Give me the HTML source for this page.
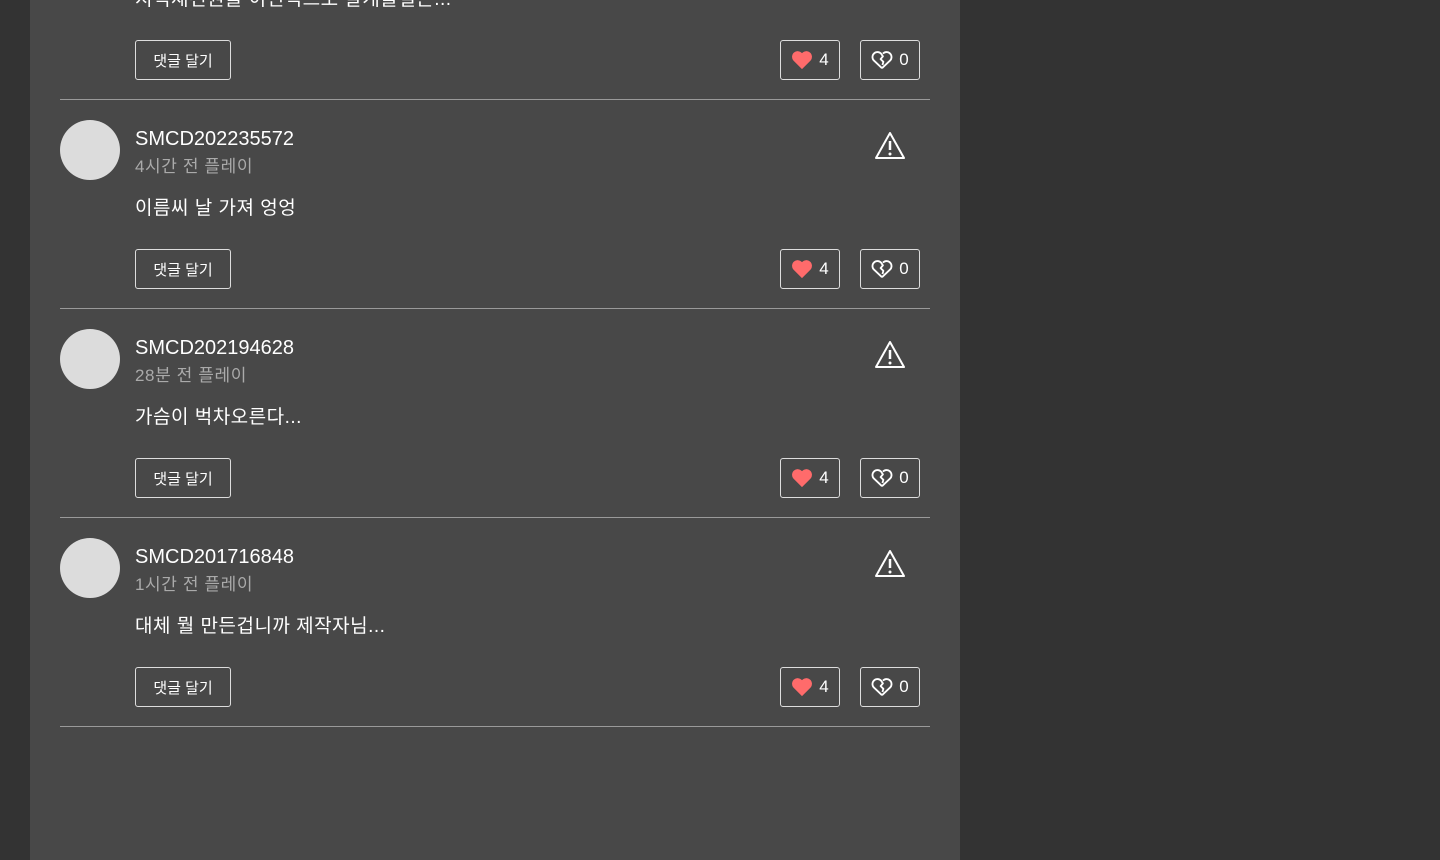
<!DOCTYPE html>
<html><head><meta charset="utf-8"><style>
*{margin:0;padding:0;box-sizing:border-box}
body{width:1440px;height:860px;background:#333;overflow:hidden;font-family:"Liberation Sans","Noto Sans CJK KR",sans-serif;position:relative}
.panel{position:absolute;left:30px;top:0;width:930px;height:860px;background:#484848}
.item{position:absolute;left:30px;width:870px;height:209px;border-bottom:1px solid #9a9a9a}
.av{position:absolute;left:0;top:20px;width:60px;height:60px;border-radius:50%;background:#dcdcdc}
.name{position:absolute;left:75px;top:28px;font-size:20px;color:#fff}
.time{position:absolute;left:75px;top:52px;font-size:17px;color:#aaa;letter-spacing:0.6px}
.txt{position:absolute;left:75px;top:93px;font-size:19px;color:#fff;letter-spacing:0.5px}
.btn{position:absolute;top:149px;height:40px;border:1px solid #ddd;border-radius:3px;color:#fff;font-size:15px;display:flex;align-items:center;justify-content:center}
.reply{left:75px;width:96px}
.like{left:720px;width:60px;gap:6px;font-size:17px}
.dis{left:800px;width:60px;gap:6px;font-size:17px}
.warn{position:absolute;left:814px;top:31px}
</style></head><body>
<div class="panel">
<div class="item" style="top:-109px">
<div class="txt">지역재건권을 이런식으로 날개줄걸는...</div>
<div class="btn reply">댓글 달기</div>
<div class="btn like"><svg width="22" height="20" viewBox="0 0 24 22"><path d="M12 21L2.5 11.5A5.5 5.5 0 0 1 12 3.5a5.5 5.5 0 0 1 9.5 8z" fill="#ff6b6b"/></svg>4</div>
<div class="btn dis"><svg width="22" height="20" viewBox="0 0 24 22"><path d="M12 20L3 11.5A5 5 0 0 1 11 4l2 3-2.5 3 3 3-1 3.5M12 20l9-8.5A5 5 0 0 0 13 4" fill="none" stroke="#fff" stroke-width="2" stroke-linejoin="round"/></svg>0</div>
</div>
<div class="item" style="top:100px">
<div class="av"></div><div class="name">SMCD202235572</div><div class="time">4시간 전 플레이</div><div class="txt">이름씨 날 가져 엉엉</div>
<svg class="warn" width="32" height="30" viewBox="0 0 32 30"><path d="M16 2L30 27H2Z" fill="none" stroke="#fff" stroke-width="2" stroke-linejoin="round"/><path d="M16 10v9" stroke="#fff" stroke-width="2.5"/><circle cx="16" cy="23" r="1.5" fill="#fff"/></svg>
<div class="btn reply">댓글 달기</div>
<div class="btn like"><svg width="22" height="20" viewBox="0 0 24 22"><path d="M12 21L2.5 11.5A5.5 5.5 0 0 1 12 3.5a5.5 5.5 0 0 1 9.5 8z" fill="#ff6b6b"/></svg>4</div>
<div class="btn dis"><svg width="22" height="20" viewBox="0 0 24 22"><path d="M12 20L3 11.5A5 5 0 0 1 11 4l2 3-2.5 3 3 3-1 3.5M12 20l9-8.5A5 5 0 0 0 13 4" fill="none" stroke="#fff" stroke-width="2" stroke-linejoin="round"/></svg>0</div>
</div>
<div class="item" style="top:309px">
<div class="av"></div><div class="name">SMCD202194628</div><div class="time">28분 전 플레이</div><div class="txt">가슴이 벅차오른다...</div>
<svg class="warn" width="32" height="30" viewBox="0 0 32 30"><path d="M16 2L30 27H2Z" fill="none" stroke="#fff" stroke-width="2" stroke-linejoin="round"/><path d="M16 10v9" stroke="#fff" stroke-width="2.5"/><circle cx="16" cy="23" r="1.5" fill="#fff"/></svg>
<div class="btn reply">댓글 달기</div>
<div class="btn like"><svg width="22" height="20" viewBox="0 0 24 22"><path d="M12 21L2.5 11.5A5.5 5.5 0 0 1 12 3.5a5.5 5.5 0 0 1 9.5 8z" fill="#ff6b6b"/></svg>4</div>
<div class="btn dis"><svg width="22" height="20" viewBox="0 0 24 22"><path d="M12 20L3 11.5A5 5 0 0 1 11 4l2 3-2.5 3 3 3-1 3.5M12 20l9-8.5A5 5 0 0 0 13 4" fill="none" stroke="#fff" stroke-width="2" stroke-linejoin="round"/></svg>0</div>
</div>
<div class="item" style="top:518px">
<div class="av"></div><div class="name">SMCD201716848</div><div class="time">1시간 전 플레이</div><div class="txt">대체 뭘 만든겁니까 제작자님...</div>
<svg class="warn" width="32" height="30" viewBox="0 0 32 30"><path d="M16 2L30 27H2Z" fill="none" stroke="#fff" stroke-width="2" stroke-linejoin="round"/><path d="M16 10v9" stroke="#fff" stroke-width="2.5"/><circle cx="16" cy="23" r="1.5" fill="#fff"/></svg>
<div class="btn reply">댓글 달기</div>
<div class="btn like"><svg width="22" height="20" viewBox="0 0 24 22"><path d="M12 21L2.5 11.5A5.5 5.5 0 0 1 12 3.5a5.5 5.5 0 0 1 9.5 8z" fill="#ff6b6b"/></svg>4</div>
<div class="btn dis"><svg width="22" height="20" viewBox="0 0 24 22"><path d="M12 20L3 11.5A5 5 0 0 1 11 4l2 3-2.5 3 3 3-1 3.5M12 20l9-8.5A5 5 0 0 0 13 4" fill="none" stroke="#fff" stroke-width="2" stroke-linejoin="round"/></svg>0</div>
</div>
</div>
</body></html>
